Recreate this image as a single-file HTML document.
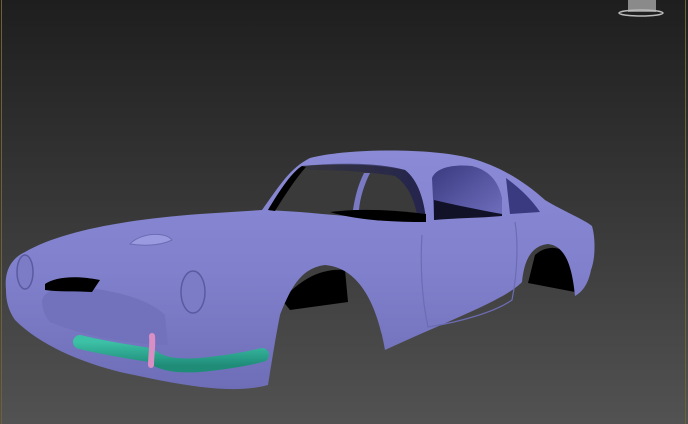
<!DOCTYPE html>
<html><head><meta charset="utf-8"><style>
html,body{margin:0;padding:0;width:688px;height:424px;overflow:hidden;background:#2b2b2b}
svg{display:block}
</style></head><body>
<svg width="688" height="424" viewBox="0 0 688 424" xmlns="http://www.w3.org/2000/svg">
<defs>
<linearGradient id="bg" x1="0" y1="0" x2="0" y2="1">
<stop offset="0" stop-color="#1e1e1e"/><stop offset="0.5" stop-color="#383838"/><stop offset="1" stop-color="#525252"/>
</linearGradient>
<linearGradient id="body" x1="0" y1="0" x2="0" y2="1">
<stop offset="0" stop-color="#8a8ad6"/><stop offset="0.5" stop-color="#8080cc"/><stop offset="1" stop-color="#6e6eb8"/>
</linearGradient>
<linearGradient id="teal" x1="0" y1="0" x2="0" y2="1">
<stop offset="0" stop-color="#3cc0a6"/><stop offset="1" stop-color="#1f8c78"/>
</linearGradient>
<linearGradient id="sw" x1="0" y1="0" x2="1" y2="1">
<stop offset="0" stop-color="#3a3a80"/><stop offset="1" stop-color="#7070c0"/>
</linearGradient>
<linearGradient id="roofsh" x1="0" y1="0" x2="1" y2="0">
<stop offset="0" stop-color="#24244e" stop-opacity="0.2"/><stop offset="1" stop-color="#24244e"/>
</linearGradient>
</defs>
<rect width="688" height="424" fill="url(#bg)"/>
<rect x="1" y="0" width="1" height="424" fill="#6b6335"/>
<rect x="685" y="0" width="1" height="424" fill="#6b6335"/>
<rect x="628" y="0" width="28" height="12" fill="#8a8a8a"/>
<ellipse cx="641" cy="13" rx="22" ry="3" fill="none" stroke="#bbb" stroke-width="1.5"/>
<path d="M282 300 C300 280 320 268 345 270 L348 302 L290 310 Z" fill="#000"/>
<path d="M535 255 C548 243 568 246 575 265 L575 292 L528 283 Z" fill="#000"/>
<path d="M6 290 C4 270 12 258 25 252 C60 232 120 220 200 214 L262 210 C280 185 290 168 310 158 C350 148 430 148 470 158 C500 166 525 182 545 200 C565 212 585 220 592 226 C596 240 595 260 591 270 C588 285 582 292 575 296 C572 265 565 246 548 244 C530 246 524 262 522 282 C505 300 450 320 385 350 C378 310 362 268 325 265 C300 268 290 290 280 315 C276 335 272 360 268 385 C230 395 180 385 120 372 C80 362 40 345 15 320 C8 310 6 300 6 290 Z" fill="url(#body)"/>
<path d="M268 210 C280 190 292 172 302 166 C340 163 375 164 405 170 C418 180 424 200 426 220 C390 220 345 216 300 212 Z" fill="#3a3a3a"/>
<path d="M268 210 C280 190 292 172 302 166 L306 167 C296 178 285 195 275 211 Z" fill="#000"/>
<path d="M302 166 C340 162 380 163 405 170 C418 180 424 200 426 220 L418 220 C415 200 408 185 395 176 C370 172 340 170 310 170 Z" fill="url(#roofsh)"/>
<path d="M330 212 C360 208 395 210 426 214 L426 222 C390 222 355 220 330 212 Z" fill="#000"/>
<path d="M364 173 L370 173 C364 185 360 198 359 210 L353 210 C355 197 358 185 364 173 Z" fill="#7a7ac4"/>
<path d="M432 178 C436 168 452 164 472 166 C488 170 498 180 502 198 L502 215 C480 217 455 217 434 220 Z" fill="url(#sw)"/>
<path d="M434 200 C455 205 480 210 502 214 L502 216 C480 218 455 218 434 220 Z" fill="#111128"/>
<path d="M506 178 C520 188 532 200 540 212 L510 214 Z" fill="#3a3a80"/>
<path d="M130 244 C140 233 165 231 172 240 C160 246 142 246 130 244 Z" fill="#9a9ae0" stroke="#6c6cb4" stroke-width="1"/>
<path d="M42 300 C45 290 60 285 90 288 C120 292 150 300 165 315 L168 345 C130 345 80 335 50 322 C44 315 42 308 42 300 Z" fill="#7272bc"/>
<path d="M45 284 C55 277 75 275 100 280 L92 292 C75 291 58 292 45 290 Z" fill="#000"/>
<ellipse cx="193" cy="292" rx="12" ry="21" fill="#7c7cc6" stroke="#5a5aa0" stroke-width="1.5"/>
<ellipse cx="25" cy="272" rx="8" ry="17" fill="#7c7cc6" stroke="#5a5aa0" stroke-width="1.5"/>
<path d="M422 235 C420 265 422 300 428 327 C460 322 495 312 512 300 C518 270 518 240 515 222" fill="none" stroke="#6c6cb4" stroke-width="1.2"/>
<path d="M80 342 C100 347 130 352 150 355 C158 362 170 367 200 365 C230 362 250 358 262 355" fill="none" stroke="url(#teal)" stroke-width="14" stroke-linecap="round"/>
<path d="M152 336 C153 345 151 356 151 365" fill="none" stroke="#d98ec4" stroke-width="6" stroke-linecap="round"/>
</svg>
</body></html>
